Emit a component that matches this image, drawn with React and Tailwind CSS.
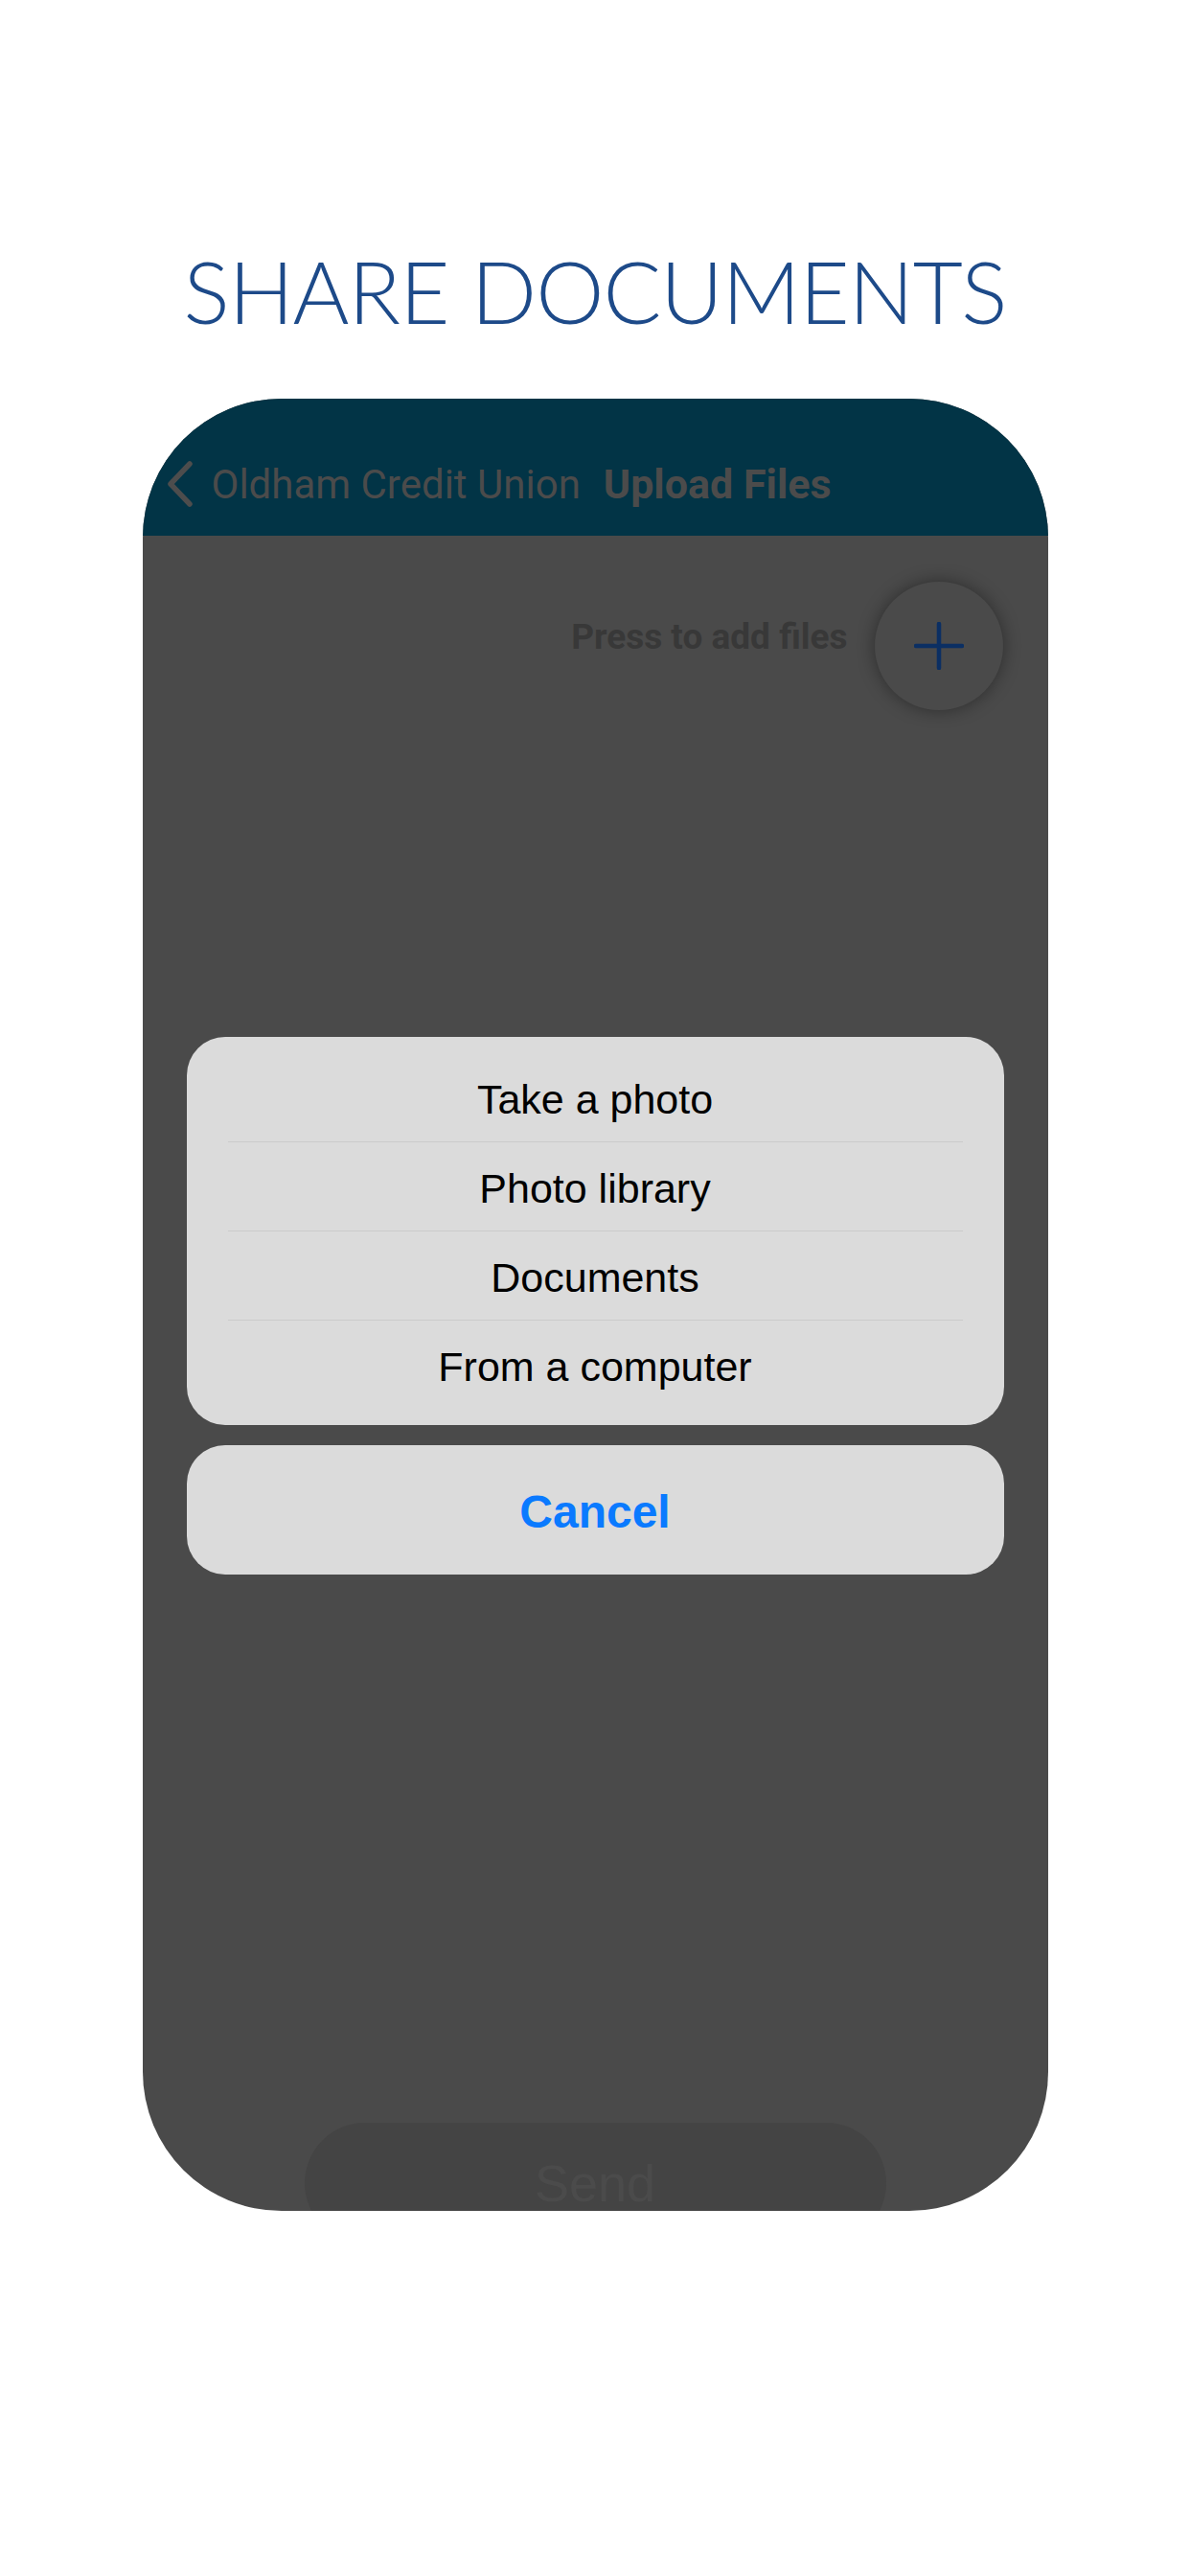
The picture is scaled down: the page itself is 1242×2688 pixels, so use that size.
export default function App() {
  const opciones = ['Take a photo', 'Photo library', 'Documents', 'From a computer']

  return (
    <div className="w-[1242px] h-[2688px] bg-white flex flex-col items-center">
      <h1 className="mt-[258px] h-[90px] text-[90px] leading-none font-light text-[#1d4a89] font-['Lato',sans-serif] tracking-[-1px]">
        SHARE DOCUMENTS
      </h1>

      <div className="mt-[68px] w-[945px] h-[1891px] rounded-[145px] overflow-hidden flex flex-col bg-[#4a4a4a]">
        {/* header */}
        <div className="h-[143px] bg-[#023446] flex items-end pb-[24px] pl-[21px]">
          <div className="h-[60px] flex items-center font-['Roboto',sans-serif] text-[42px] text-[#4b4b4b]">
            <svg width="34" height="50" viewBox="0 0 34 50" className="mr-[17px]">
              <polyline points="28,4 8,25 28,46" fill="none" stroke="#4d4d4d" strokeWidth="5.5" strokeLinecap="round" strokeLinejoin="round" />
            </svg>
            <span>Oldham Credit Union</span>
            <span className="ml-[24px] font-bold text-[43px]">Upload Files</span>
          </div>
        </div>

        {/* body */}
        <div className="flex-1 flex flex-col">
          <div className="mt-[48px] mr-[47px] flex justify-end items-center">
            <span className="mb-[19px] mr-[28px] font-['Roboto',sans-serif] font-bold text-[37px] text-[#383838]">Press to add files</span>
            <div className="w-[134px] h-[134px] rounded-full bg-[#4a4a4a] shadow-[0_0_18px_rgba(0,0,0,0.4)] flex items-center justify-center">
              <svg width="52" height="50" viewBox="0 0 52 50">
                <path d="M26 2 V48 M2 25 H50" stroke="#0b2f63" strokeWidth="4.5" strokeLinecap="round" />
              </svg>
            </div>
          </div>

          {/* action sheet */}
          <div className="mt-[341px] mx-[46px] rounded-[40px] bg-[#dbdbdb] py-[17px] font-['Liberation_Sans',Arial,sans-serif] text-black">
            {opciones.map((op, i) => (
              <div key={op} className={`mx-[43px] ${i > 0 ? 'border-t border-[#cbcbcb]' : ''}`}>
                <div className="h-[92px] pt-[4px] flex items-center justify-center text-[43px]">{op}</div>
              </div>
            ))}
          </div>
          <div className="mt-[21px] mx-[46px] h-[135px] rounded-[40px] bg-[#dbdbdb] pt-[5px] flex items-center justify-center font-['Liberation_Sans',Arial,sans-serif] font-bold text-[48px] text-[#0a7aff]">
            Cancel
          </div>

          {/* send */}
          <div className="mt-auto -mb-[34px] mx-auto w-[607px] h-[126px] rounded-[63px] bg-[#444444] flex items-center justify-center font-['Liberation_Sans',Arial,sans-serif] text-[54px] text-[#4b4b4b]">
            Send
          </div>
        </div>
      </div>
    </div>
  )
}
